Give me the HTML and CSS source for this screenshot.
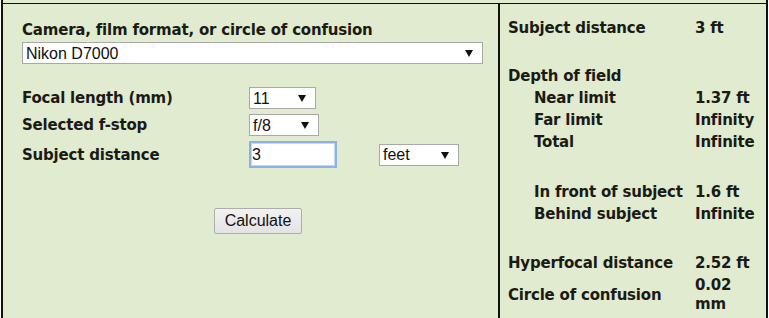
FILE: index.html
```html
<!DOCTYPE html>
<html lang="en">
<head>
    <meta charset="UTF-8">
    <title>Depth of Field Calculator</title>
    <link rel="stylesheet" href="styles.css">
</head>
<body>

    <div class="calc">
        <div class="panel">
            <!-- Inputs -->
            <form class="inputs" onsubmit="return false">
                <label class="label" for="camera">Camera, film format, or circle of confusion</label>
                <div class="sel sel-wide">
                    <select id="camera">
                        <option>Nikon D7000</option>
                    </select>
                </div>

                <div class="fields">
                    <label class="label" for="focal">Focal length (mm)</label>
                    <div class="sel sel-focal">
                        <select id="focal"><option>11</option></select>
                    </div>

                    <label class="label" for="fstop">Selected f-stop</label>
                    <div class="sel sel-fstop">
                        <select id="fstop"><option>f/8</option></select>
                    </div>

                    <label class="label" for="distance">Subject distance</label>
                    <div class="distance-row">
                        <input type="text" id="distance" class="text-input" value="3">
                        <div class="sel sel-unit">
                            <select id="unit"><option>feet</option></select>
                        </div>
                    </div>
                </div>

                <button type="submit" class="calc-button">Calculate</button>
            </form>

            <!-- Results -->
            <div class="results">
                <table>
                    <tr><td>Subject distance</td><td class="val">3 ft</td></tr>
                    <tr class="spacer"><td colspan="2"></td></tr>
                    <tr><td>Depth of field</td><td></td></tr>
                    <tr><td class="sub">Near limit</td><td class="val">1.37 ft</td></tr>
                    <tr><td class="sub">Far limit</td><td class="val">Infinity</td></tr>
                    <tr><td class="sub">Total</td><td class="val">Infinite</td></tr>
                    <tr class="spacer s2"><td colspan="2"></td></tr>
                    <tr><td class="sub">In front of subject</td><td class="val">1.6 ft</td></tr>
                    <tr><td class="sub">Behind subject</td><td class="val">Infinite</td></tr>
                    <tr class="spacer s3"><td colspan="2"></td></tr>
                    <tr><td>Hyperfocal distance</td><td class="val">2.52 ft</td></tr>
                    <tr><td>Circle of confusion</td><td class="val wrap">0.02 mm</td></tr>
                </table>
            </div>
        </div>
    </div>

</body>
</html>
```

FILE: styles.css
```css
/* Page */
body {
    margin: 0;
    padding: 0;
    background-color: #ffffff;
    font-family: 'DejaVu Sans', Verdana, sans-serif;
    color: #1c1a14;
}

.calc {
    margin-left: 1px;
    width: 767px;
    box-sizing: border-box;
    height: 318px;
    padding-top: 3px;
    background-color: #e0ebcf;
    border-left: 2px solid #111;
    border-right: 2px solid #111;
}

.panel {
    display: flex;
    height: 100%;
    border-top: 1px solid #111;
}

.label {
    font-weight: bold;
    font-size: 15px;
    line-height: 18px;
    letter-spacing: -0.2px;
}

/* Inputs column */
.inputs {
    width: 497px;
    box-sizing: border-box;
    padding: 17px 0 0 19px;
    border-right: 2px solid #111;
    display: flex;
    flex-direction: column;
    align-items: flex-start;
}

.sel {
    position: relative;
    display: inline-block;
}

.sel select {
    appearance: none;
    -webkit-appearance: none;
    width: 100%;
    height: 22px;
    margin: 0;
    padding: 0 0 0 3px;
    border: 1px solid #a9a9a9;
    border-radius: 0;
    background-color: #fff;
    font-family: 'Liberation Sans', Arial, sans-serif;
    font-size: 16px;
    color: #111;
}

.sel::after {
    content: "";
    position: absolute;
    top: 8px;
    right: 10px;
    border-left: 4px solid transparent;
    border-right: 4px solid transparent;
    border-top: 7px solid #111;
    pointer-events: none;
}

.sel-wide {
    width: 461px;
    margin-top: 3px;
}

.sel-focal { width: 67px; }
.sel-fstop { width: 70px; }
.sel-unit { width: 80px; }

.fields {
    margin-top: 23px;
    display: grid;
    grid-template-columns: 227px auto;
    row-gap: 5px;
    align-items: center;
}

.distance-row {
    display: flex;
    align-items: center;
    gap: 42px;
}

.text-input {
    width: 88px;
    height: 27px;
    box-sizing: border-box;
    margin: 0;
    padding: 0 1px;
    border: 2px solid #8cb0e8;
    outline: 1px solid #c4d7f3;
    outline-offset: -3px;
    background-color: #fff;
    font-family: 'Liberation Sans', Arial, sans-serif;
    font-size: 16px;
    color: #111;
}

.calc-button {
    margin: 40px 0 0 192px;
    width: 88px;
    height: 26px;
    padding: 0;
    border: 1px solid #adadad;
    border-radius: 2px;
    background: linear-gradient(#f2f2f2, #e3e3e3);
    font-family: 'Liberation Sans', Arial, sans-serif;
    font-size: 16px;
    color: #111;
}

/* Results column */
.results {
    flex: 1;
    padding: 13px 0 0 8px;
}

.results table {
    border-collapse: collapse;
    font-weight: bold;
    font-size: 15px;
    letter-spacing: -0.2px;
}

.results td {
    height: 22px;
    box-sizing: border-box;
    padding: 2px 0;
    line-height: 18px;
    vertical-align: middle;
}

.results td:first-child {
    width: 187px;
}

.results td.sub {
    padding-left: 26px;
    width: 161px;
}

.results td.val {
    width: 62px;
}

.results td.wrap {
    line-height: 19px;
}

.results tr.spacer td {
    height: 26px;
}

.results tr.s2 td {
    height: 28px;
}

.results tr.s3 td {
    height: 27px;
}
```
